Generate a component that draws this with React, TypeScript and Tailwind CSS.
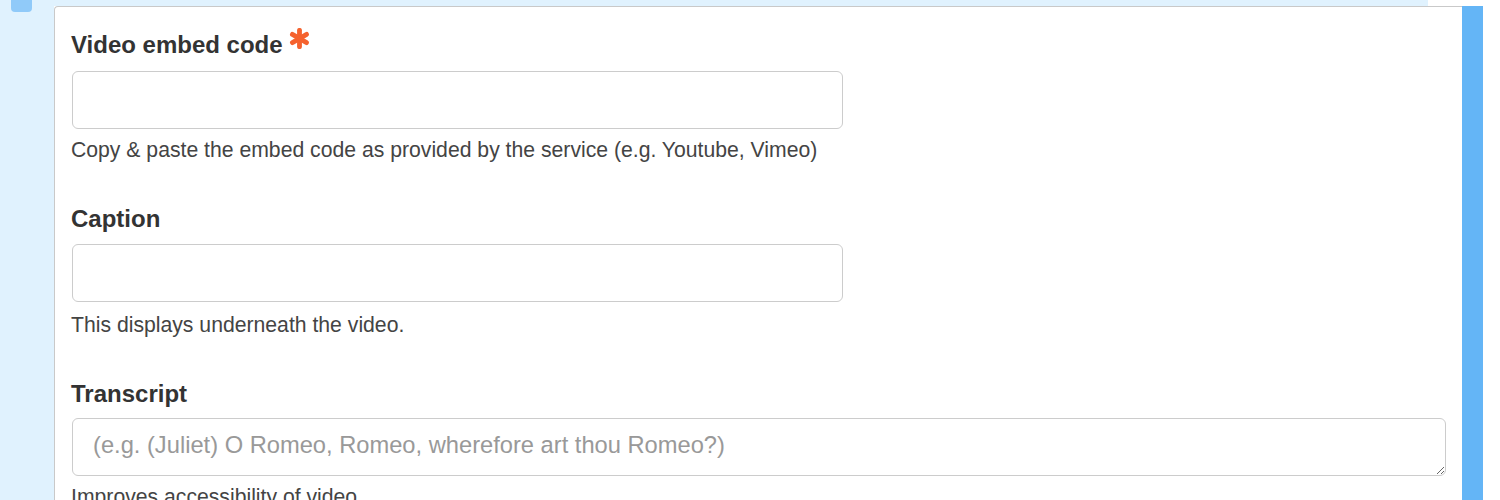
import React from 'react'

function Asterisk() {
  const arms = [0, 60, 120]
  return (
    <svg viewBox="0 0 20 20" className="-mt-[4px] ml-[6px] h-[21px] w-[21px] self-start" aria-hidden>
      {arms.map((a) => (
        <line
          key={a}
          x1="10"
          y1="2.2"
          x2="10"
          y2="17.8"
          stroke="#f5622e"
          strokeWidth="4.6"
          strokeLinecap="round"
          transform={`rotate(${a} 10 10)`}
        />
      ))}
    </svg>
  )
}

function Label({ children, required }: { children: React.ReactNode; required?: boolean }) {
  return (
    <label className="-ml-px flex items-start text-[24px] font-bold leading-[26px] text-[#333]">
      {children}
      {required && <Asterisk />}
    </label>
  )
}

function Help({ children, className = 'mt-[6px]' }: { children: React.ReactNode; className?: string }) {
  return <p className={`-ml-px text-[21.2px] leading-[30px] text-[#444] ${className}`}>{children}</p>
}

export default function App() {
  return (
    <div className="flex h-[500px] w-[1500px] overflow-hidden bg-white font-['Liberation_Sans',Arial,sans-serif]">
      <div className="w-[54px] shrink-0 bg-[#e0f2fe]">
        <div className="ml-[11px] h-[12px] w-[21px] rounded-b-[4px] bg-[#90caf9]" />
      </div>

      <div className="flex w-[1408px] shrink-0 flex-col">
        <div className="flex h-[6px] shrink-0">
          <div className="w-[1374px] bg-[#e0f2fe]" />
        </div>
        <div className="flex-1 rounded-tl-[4px] border-l border-t border-[#c9c9c9] bg-white pl-[17px] pr-[16px] pt-[25px]">
          <Label required>Video embed code</Label>
          <input
            type="text"
            className="mt-[13px] block h-[58px] w-[771px] rounded-[6px] border border-[#ccc] bg-white px-[20px] text-[24px] outline-none"
          />
          <Help>Copy &amp; paste the embed code as provided by the service (e.g. Youtube, Vimeo)</Help>

          <div className="mt-[41px]">
            <Label>Caption</Label>
          </div>
          <input
            type="text"
            className="mt-[12px] block h-[58px] w-[771px] rounded-[6px] border border-[#ccc] bg-white px-[20px] text-[24px] outline-none"
          />
          <Help className="mt-[8px]">This displays underneath the video.</Help>

          <div className="mt-[41px]">
            <Label>Transcript</Label>
          </div>
          <textarea
            placeholder="(e.g. (Juliet) O Romeo, Romeo, wherefore art thou Romeo?)"
            className="mt-[11px] block h-[58px] w-full rounded-[6px] border border-[#ccc] bg-white px-[20px] py-[11px] text-[23.7px] leading-[30px] text-[#333] outline-none placeholder:text-[#999]"
          />
          <Help>Improves accessibility of video.</Help>
        </div>
      </div>

      <div className="mt-[6px] w-[21px] shrink-0 bg-[#64b5f6]" />
      <div className="flex-1 bg-white" />
    </div>
  )
}
